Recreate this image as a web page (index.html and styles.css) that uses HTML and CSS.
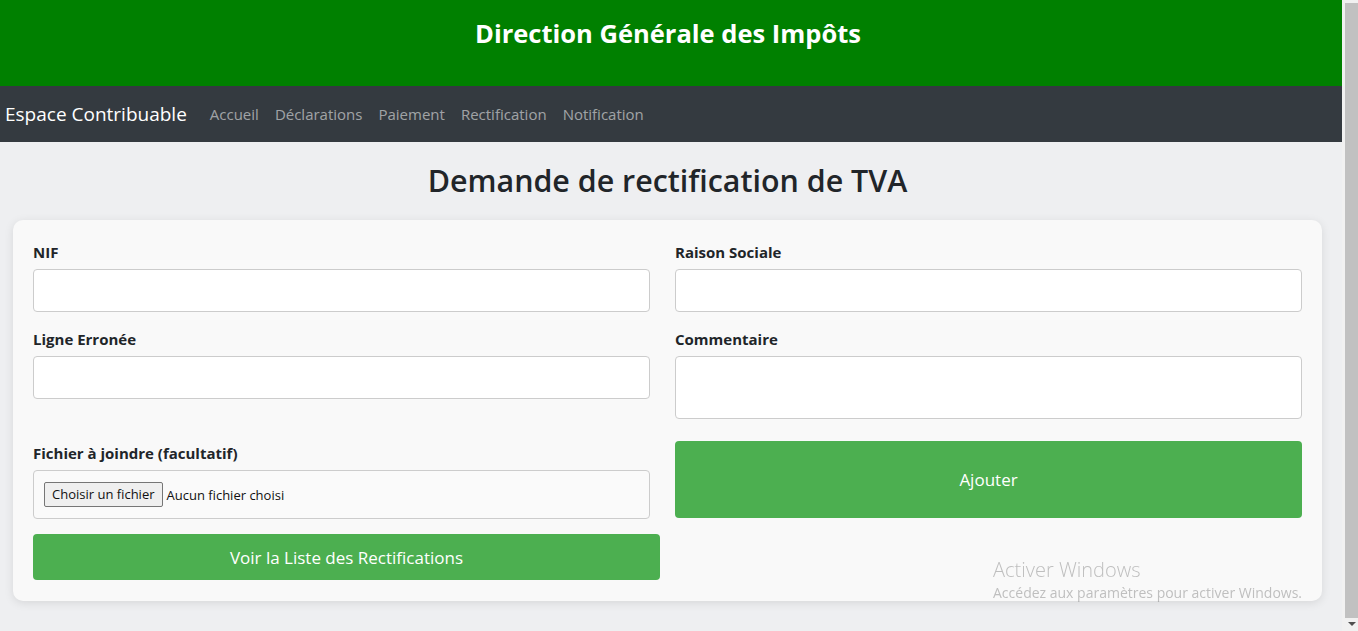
FILE: index.html
```html
<!DOCTYPE html>
<html lang="fr">
<head>
<meta charset="utf-8">
<title>Demande de rectification de TVA</title>
<link rel="stylesheet" href="styles.css">
</head>
<body>
<div class="window">
  <div class="page">
    <header class="top">
      <h1 class="top-title">Direction Générale des Impôts</h1>
    </header>
    <nav class="navbar">
      <a class="brand" href="#">Espace Contribuable</a>
      <a class="nav-link" href="#">Accueil</a>
      <a class="nav-link" href="#">Déclarations</a>
      <a class="nav-link" href="#">Paiement</a>
      <a class="nav-link" href="#">Rectification</a>
      <a class="nav-link" href="#">Notification</a>
    </nav>
    <main class="main">
      <h2 class="page-title">Demande de rectification de TVA</h2>
      <form class="card">
        <div class="grid">
          <div class="field narrow">
            <label class="label">NIF</label>
            <input class="input" type="text">
          </div>
          <div class="field">
            <label class="label">Raison Sociale</label>
            <input class="input" type="text">
          </div>
          <div class="field narrow">
            <label class="label">Ligne Erronée</label>
            <input class="input" type="text">
          </div>
          <div class="field">
            <label class="label">Commentaire</label>
            <textarea class="input textarea"></textarea>
          </div>
          <div class="field narrow file-field">
            <label class="label">Fichier à joindre (facultatif)</label>
            <div class="file-box">
              <span class="file-btn">Choisir un fichier</span>
              <span class="file-name">Aucun fichier choisi</span>
            </div>
          </div>
          <div class="field action">
            <button class="btn btn-add" type="button">Ajouter</button>
          </div>
          <div class="field">
            <button class="btn btn-list" type="button">Voir la Liste des Rectifications</button>
          </div>
        </div>
      </form>
    </main>
  </div>
  <div class="scrollbar">
    <div class="thumb"></div>
    <div class="arrow"></div>
  </div>
</div>
<div class="watermark">
  <div class="wm-title">Activer Windows</div>
  <div class="wm-sub">Accédez aux paramètres pour activer Windows.</div>
</div>
</body>
</html>
```

FILE: styles.css
```css
* { box-sizing: border-box; }
html, body { margin: 0; padding: 0; height: 100%; overflow: hidden; }
body {
  font-family: "Open Sans", "Noto Sans", sans-serif;
  color: #212529;
  background: #eeeff1;
}
.window { display: flex; height: 631px; }
.page { flex: 1; min-width: 0; background: #eeeff1; }

.top {
  background: #008000;
  height: 86px;
  display: flex;
  justify-content: center;
  padding: 15px 6px 0 0;
}
.top-title {
  margin: 0;
  color: #fff;
  font-size: 25.5px;
  font-weight: 700;
  line-height: 36px;
}

.navbar {
  background: #343a40;
  height: 56px;
  display: flex;
  align-items: center;
  padding-left: 5px;
}
.brand {
  color: #fff;
  text-decoration: none;
  font-size: 19px;
  margin-right: 15px;
}
.nav-link {
  color: rgba(255,255,255,0.55);
  text-decoration: none;
  font-size: 15px;
  padding: 0 8px;
}

.main { padding: 19px 20px 0 13px; }
.page-title {
  margin: 0 0 19px;
  text-align: center;
  font-size: 30.4px;
  font-weight: 600;
  line-height: 40px;
}

.card {
  background: #f9f9f9;
  border-radius: 10px;
  box-shadow: 0 2px 10px rgba(0,0,0,0.1);
  padding: 21px 20px 21px;
}
.grid {
  display: grid;
  grid-template-columns: 1fr 1fr;
  column-gap: 15px;
  row-gap: 16px;
}
.field { display: flex; flex-direction: column; }
.narrow .input, .narrow .file-box { width: calc(100% - 10px); }
.label {
  font-size: 15px;
  font-weight: 700;
  line-height: 22px;
  margin-bottom: 6px;
}
.input {
  height: 43px;
  border: 1px solid #ccc;
  border-radius: 4px;
  background: #fff;
  font-family: inherit;
  font-size: 16px;
  padding: 6px 10px;
}
.textarea { height: 63px; resize: none; }

.file-field { margin-top: 7px; }
.file-box {
  height: 49px;
  border: 1px solid #ccc;
  border-radius: 4px;
  background: #fafafa;
  display: flex;
  align-items: center;
  padding-left: 10px;
  font-size: 13px;
}
.file-btn {
  background: #efefef;
  border: 1px solid #767676;
  border-radius: 2px;
  padding: 2px 7px;
  line-height: 19px;
  color: #111;
  margin-right: 4px;
}
.file-name { color: #111; }

.action { margin-top: 6px; }
.btn {
  border: 0;
  border-radius: 4px;
  background: #4caf50;
  color: #fff;
  font-family: inherit;
  font-size: 17px;
  cursor: pointer;
}
.btn-add { height: 77px; }
.btn-list { height: 46px; margin-top: -1px; }

.scrollbar {
  width: 16px;
  background: #f1f1f1;
  display: flex;
  flex-direction: column;
  align-items: center;
  padding-top: 3px;
}
.thumb {
  width: 13px;
  margin-left: 3px;
  height: 615px;
  background: #c1c1c1;
}
.arrow {
  margin-top: 4px;
  margin-left: 3px;
  width: 0; height: 0;
  border-left: 4px solid transparent;
  border-right: 4px solid transparent;
  border-top: 4px solid #505050;
}

.watermark {
  position: fixed;
  left: 993px;
  top: 556px;
  color: rgba(120,120,120,0.45);
  pointer-events: none;
}
.wm-title { font-size: 20px; font-weight: 300; line-height: 27px; }
.wm-sub { font-size: 14px; line-height: 19px; }
```
